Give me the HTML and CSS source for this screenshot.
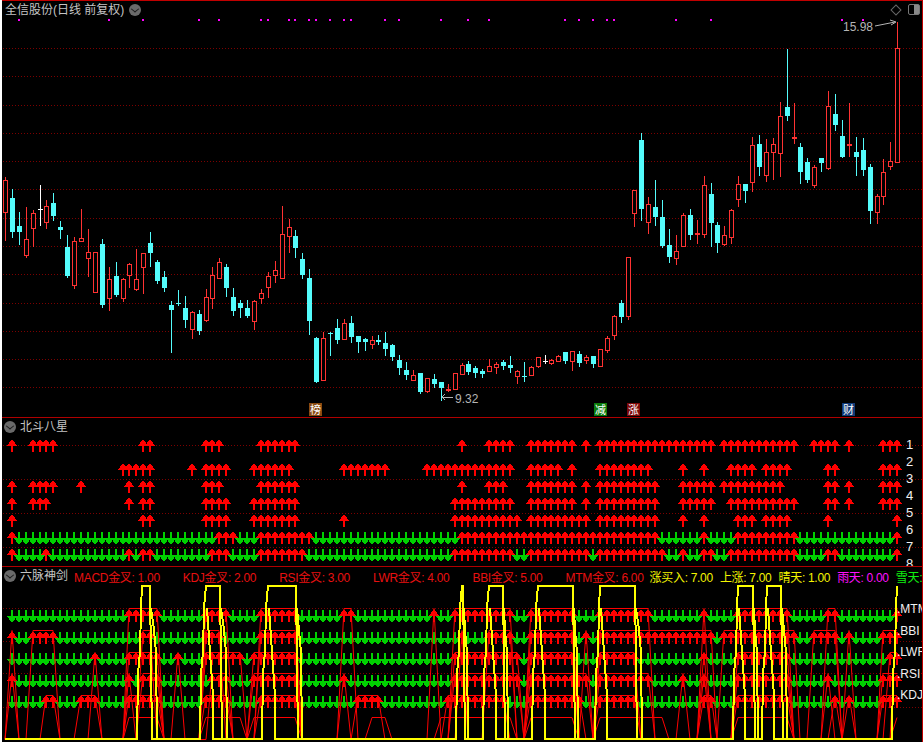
FILE: index.html
```html
<!DOCTYPE html>
<html lang="en">
<head>
    <meta charset="UTF-8">
    <title>全信股份</title>
    <link rel="stylesheet" href="styles.css">
</head>
<body>
    <div class="terminal">
        <section class="pane pane-main">
            <svg class="plot" id="mainPlot" viewBox="2 1 921 416"></svg>
            <header class="pane-head">
                <span class="title">全信股份(日线 前复权)</span>
                <span class="toggle"></span>
            </header>
            <div class="window-tools">
                <span class="tool-diamond"></span>
                <span class="tool-panel"></span>
            </div>
        </section>

        <section class="pane pane-stars">
            <svg class="plot" id="starsPlot" viewBox="2 418 921 148"></svg>
            <header class="pane-head pane-head-sub">
                <span class="toggle"></span>
                <span class="title">北斗八星</span>
            </header>
            <ol class="row-labels">
                <li>1</li><li>2</li><li>3</li><li>4</li><li>5</li><li>6</li><li>7</li><li>8</li>
            </ol>
        </section>

        <section class="pane pane-swords">
            <svg class="plot" id="swordsPlot" viewBox="2 567 921 175"></svg>
            <header class="pane-head pane-head-sub">
                <span class="toggle"></span>
                <span class="title">六脉神剑</span>
                <ul class="legend">
                    <li class="red wide">MACD金叉: 1.00</li>
                    <li class="red wide">KDJ金叉: 2.00</li>
                    <li class="red wide">RSI金叉: 3.00</li>
                    <li class="red wide">LWR金叉: 4.00</li>
                    <li class="red wide">BBI金叉: 5.00</li>
                    <li class="red">MTM金叉: 6.00</li>
                    <li class="yellow">涨买入: 7.00</li>
                    <li class="yellow">上涨: 7.00</li>
                    <li class="yellow">晴天: 1.00</li>
                    <li class="magenta">雨天: 0.00</li>
                    <li class="green">雪天: 0.00</li>
                </ul>
            </header>
            <ul class="signal-labels">
                <li>.MTM</li><li>.BBI</li><li>.LWR</li><li>.RSI</li><li>.KDJ</li>
            </ul>
        </section>
    </div>

    <script src="chart.js"></script>
</body>
</html>
```

FILE: styles.css
```css
* {
    margin: 0;
    padding: 0;
    box-sizing: border-box;
}

body {
    background: #fff;
    overflow: hidden;
}

.terminal {
    width: 921px;
    height: 742px;
    margin-left: 2px;
    background: #000;
    border-top: 1px solid #c00000;
    display: flex;
    flex-direction: column;
    font-family: "Liberation Sans", "Noto Sans CJK SC", sans-serif;
    font-size: 12px;
    color: #c4c4c4;
}

.pane {
    position: relative;
    overflow: hidden;
    border-right: 1px solid #c00000;
}

.pane-main {
    height: 416px;
}

.pane-stars {
    height: 149px;
    border-top: 1px solid #b00000;
}

.pane-swords {
    flex: 1;
    border-top: 1px solid #b00000;
}

.plot {
    position: absolute;
    top: 0;
    left: 0;
    width: 921px;
    height: 100%;
    shape-rendering: crispEdges;
}

.pane-head {
    position: relative;
    display: flex;
    align-items: center;
    gap: 5px;
    height: 18px;
    padding-left: 3px;
    white-space: nowrap;
}

.pane-head-sub {
    padding-left: 2px;
    gap: 4px;
}

.title {
    line-height: 18px;
}

.toggle {
    position: relative;
    flex: none;
    width: 12px;
    height: 12px;
    border-radius: 50%;
    background: #6a6a6a;
}

.toggle::after {
    content: "";
    position: absolute;
    left: 3px;
    top: 2px;
    width: 5px;
    height: 5px;
    border-right: 1px solid #1c1c1c;
    border-bottom: 1px solid #1c1c1c;
    transform: scaleY(0.8) rotate(45deg);
}

.window-tools {
    position: absolute;
    top: 3px;
    right: 2px;
    display: flex;
    align-items: center;
    gap: 8px;
}

.tool-diamond {
    width: 8px;
    height: 8px;
    border: 1px solid #666;
    transform: rotate(45deg);
}

.tool-panel {
    width: 12px;
    height: 11px;
    border: 1px solid #777;
    border-radius: 2px;
    background: linear-gradient(90deg, #000 50%, #888 50%);
}

.legend {
    list-style: none;
    display: flex;
    margin-left: 2px;
    gap: 6px;
    letter-spacing: -0.3px;
}

.legend .wide {
    margin-right: 17px;
}

.legend .yellow,
.legend .magenta {
    margin-right: 1px;
}

.red { color: #e81010; }
.yellow { color: #f4f400; }
.magenta { color: #ff10ff; }
.green { color: #10f010; }

.row-labels,
.signal-labels {
    list-style: none;
    position: absolute;
    color: #f0f0f0;
    white-space: nowrap;
}

.row-labels {
    top: 20px;
    left: 904px;
    display: flex;
    flex-direction: column;
    gap: 3px;
    font-size: 13px;
    line-height: 14px;
}

.signal-labels {
    top: 35px;
    left: 895px;
    display: flex;
    flex-direction: column;
    gap: 7px;
    line-height: 14.6px;
}

.price-tag {
    font-size: 12px;
    fill: #b4b4b4;
    font-family: "Liberation Sans", sans-serif;
}

.badge-text {
    font-size: 11px;
    fill: #fff;
    text-anchor: middle;
    font-family: "Noto Sans CJK SC", sans-serif;
}
```

FILE: chart.js
```js
const RED = '#ff3232';
const CYAN = '#54fcfc';
const WHITE = '#ffffff';
const UP = '#ff0000';
const DOWN = '#00d000';
const LAST = 129;

// candles were measured on a 3x crop: [x, kind, high, bodyTop, bodyBottom, low]
// each block has its own origin so the numbers stay close to the crop
const blocks = [
    { ox: 0, oy: 170, rows: [
        [16,'r',20,30,125,210],[37,'c',57,84,186,200],[58,'c',126,168,186,222],[79,'r',111,208,254,260],
        [100,'r',120,129,173,228],[121,'w',45,118,120,165],[139,'r',90,108,155,174],[160,'c',69,99,138,150],
        [181,'c',153,171,180,204],[202,'c',195,231,318,321],[223,'r',202,213,345,354],[244,'r',117,204,213,213],
        [265,'r',177,246,264,318],[286,'r',246,246,366,366],[307,'c',207,222,405,411],[328,'r',291,327,384,420],
        [349,'c',276,318,375,378],[370,'r',324,327,384,393],[388,'r',279,282,315,351],[409,'r',237,327,357,360],
        [430,'r',249,249,291,369],[451,'c',186,219,249,288],[472,'c',270,276,333,339],[493,'c',303,321,354,363],
        [514,'c',393,405,420,546],[535,'c',360,399,402,405],[556,'c',378,414,450,471],[577,'r',423,426,477,504],
        [598,'c',420,432,483,492],[619,'r',357,381,450,453],[637,'r',291,315,384,414],[658,'r',264,276,324,324],
        [679,'c',282,291,354,378],[700,'c',354,381,423,435],[721,'c',390,399,414,441],[742,'c',390,414,438,441],
        [763,'r',390,393,453,477],[784,'r',357,369,384,399],[805,'r',306,318,351,381],[826,'r',273,300,315,336],
        [847,'r',108,192,324,324],[868,'r',147,171,198,246],[886,'c',180,198,234,261],[907,'c',249,267,315,324],
        [928,'c',297,324,453,492]
    ]},
    { ox: 300, oy: 300, rows: [
        [49,'c',111,114,246,246],[70,'r',96,114,240,240],[91,'c',96,99,102,165],[112,'c',57,84,120,129],
        [133,'r',57,69,117,117],[154,'c',48,69,111,126],[175,'c',108,108,126,156],[196,'c',114,117,126,150],
        [217,'r',108,120,132,144],[235,'c',105,120,126,132],[256,'c',96,129,147,165],[277,'c',132,135,171,180],
        [298,'c',165,180,204,222],[319,'c',186,210,225,237],[340,'r',210,225,240,240],[361,'c',219,219,276,279],
        [382,'r',234,234,273,276],[403,'c',222,237,252,261],[424,'c',246,246,264,300],[445,'r',252,267,273,273],
        [466,'r',219,219,267,267],[487,'r',189,195,222,222],[505,'c',183,192,216,222],[526,'c',198,204,219,231],
        [547,'c',207,213,222,231],[568,'r',177,198,213,213],[589,'r',186,192,201,219],[610,'c',180,186,198,207],
        [631,'c',168,195,204,216],[652,'r',210,213,228,249],[673,'c',186,228,231,243],[694,'r',198,201,225,225],
        [715,'r',171,171,198,201],[736,'w',165,183,186,189],[754,'r',177,181,189,192],[775,'r',165,168,183,183],
        [796,'c',156,156,183,189],[817,'r',153,153,183,210],[838,'c',153,162,189,198],[859,'r',165,171,180,189],
        [880,'c',168,168,192,201],[901,'r',147,147,198,198],[922,'r',108,114,150,156],[943,'r',45,48,105,117],
        [964,'c',0,9,51,66],[985,'r',-129,-129,48,57]
    ]},
    { ox: 620, oy: 0, rows: [
        [43,'r',570,570,638,678],[64,'c',400,420,627,660],[85,'r',591,612,666,699],[106,'c',540,621,651,675],
        [127,'c',600,651,738,741],[148,'c',687,735,771,786],[169,'r',705,753,774,792],[190,'r',639,645,738,738],
        [211,'c',627,645,705,717],[232,'r',660,699,705,729],[253,'r',528,555,702,711],[274,'c',549,582,669,738],
        [292,'c',666,675,729,756],[313,'r',678,705,732,735],[334,'r',627,630,711,729],[355,'r',528,552,597,618],
        [376,'c',552,552,573,606],[397,'r',411,435,546,573],[418,'c',405,432,501,525],[439,'r',417,456,525,543],
        [460,'r',414,432,456,537],[481,'r',306,348,459,528],[502,'c',147,321,348,360],[523,'r',309,411,417,429],
        [541,'c',429,441,516,549],[562,'c',474,486,540,546],[583,'r',495,501,555,561],[604,'c',474,474,489,513],
        [625,'r',273,318,504,507],[646,'c',282,342,375,390],[667,'c',360,408,471,471],[688,'r',309,432,438,468],
        [709,'c',411,456,471,525],[730,'c',414,450,510,525],[751,'c',492,501,633,669],[772,'r',582,588,636,669],
        [790,'r',477,516,588,612],[811,'r',426,483,498,507],[832,'r',66,144,486,486]
    ]}
];

const candles = [];
blocks.forEach(function(block) {
    block.rows.forEach(function(r) {
        candles.push({
            x: block.ox + Math.floor(r[0] / 3),
            kind: r[1],
            high: block.oy + Math.round(r[2] / 3),
            top: block.oy + Math.round(r[3] / 3),
            bottom: block.oy + Math.round(r[4] / 3),
            low: block.oy + Math.round(r[5] / 3)
        });
    });
});

const kindColor = { r: RED, c: CYAN, w: WHITE };

// "1,4-7,20" -> {1,4,5,6,7,20}
function parseSet(text) {
    const set = new Set();
    text.split(',').forEach(function(part) {
        const ends = part.split('-').map(Number);
        const to = ends.length > 1 ? ends[1] : ends[0];
        for (let i = ends[0]; i <= to; i++) set.add(i);
    });
    return set;
}

function line(x1, y1, x2, y2, color) {
    return `<line x1="${x1}" y1="${y1}" x2="${x2}" y2="${y2}" stroke="${color}"/>`;
}

function dottedLine(y) {
    return `<line x1="3" y1="${y + 0.5}" x2="922" y2="${y + 0.5}" stroke="#7c0000" stroke-dasharray="1 2"/>`;
}

function drawCandle(c) {
    const color = kindColor[c.kind];
    const wx = c.x + 0.5;
    let out = line(wx, c.high, wx, c.low + 1, color);
    const h = c.bottom - c.top;
    if (c.kind === 'r' && h > 2) {
        out += `<rect x="${c.x - 1.5}" y="${c.top + 0.5}" width="4" height="${h}" fill="#000" stroke="${color}"/>`;
    } else {
        out += `<rect x="${c.x - 2}" y="${c.top}" width="5" height="${Math.max(h, 1)}" fill="${color}"/>`;
    }
    return out;
}

function upArrow(x, y) {
    return `<path d="M${x - 1} ${y}H${x + 1}L${x + 5} ${y + 6}H${x + 1}V${y + 12}H${x - 1}V${y + 6}H${x - 5}Z" fill="${UP}"/>`;
}

function downArrow(x, y) {
    return `<path d="M${x - 1} ${y}H${x + 1}V${y + 6}H${x + 5}L${x + 1} ${y + 12}H${x - 1}L${x - 5} ${y + 6}H${x - 1}Z" fill="${DOWN}"/>`;
}

// red only, or red with green filling the other slots
function arrowRow(y, reds, withDown) {
    const on = parseSet(reds);
    let out = '';
    for (let i = 1; i < LAST; i++) {
        if (withDown && !on.has(i)) out += downArrow(candles[i].x, y);
    }
    on.forEach(function(i) {
        out += upArrow(candles[i].x, y);
    });
    return out;
}

function signalLine(reds, level) {
    const on = parseSet(reds);
    const pts = candles.map(function(c, i) {
        return c.x + ',' + (on.has(i) ? level : 739.5);
    });
    return `<polyline points="${pts.join(' ')}" fill="none" stroke="#ff0000" shape-rendering="auto"/>`;
}

// main pane
const gridMain = [48, 76, 105, 133, 161, 189, 218, 246, 274, 303, 331, 359, 387];
const buyDots = [19, 109, 143, 199, 219, 261, 268, 289, 295, 309, 316, 330, 344, 351, 385, 399, 441, 468, 489, 565, 579, 593, 607, 614, 676, 711, 842, 863];
const badges = [
    { x: 309, text: '榜', bg: '#8a4a10' },
    { x: 594, text: '减', bg: '#0a7a0a' },
    { x: 627, text: '涨', bg: '#7c0808' },
    { x: 842, text: '财', bg: '#123a78' }
];

let mainSvg = gridMain.map(dottedLine).join('');
mainSvg += buyDots.map(function(x) {
    return `<rect x="${x - 1}" y="19" width="2" height="2" fill="#ff00ff"/>`;
}).join('');
mainSvg += candles.map(drawCandle).join('');
mainSvg += `<text class="price-tag" x="843" y="31">15.98</text>`;
mainSvg += `<path d="M875 26L895 22M890 20L896 22L891 25" fill="none" stroke="#b4b4b4" shape-rendering="auto"/>`;
mainSvg += `<text class="price-tag" x="455" y="403">9.32</text>`;
mainSvg += `<path d="M453 397H442M445 394L442 397L445 400" fill="none" stroke="#b4b4b4"/>`;
mainSvg += badges.map(function(b) {
    return `<rect x="${b.x}" y="403" width="13" height="13" fill="${b.bg}"/>` +
        `<text class="badge-text" x="${b.x + 6.5}" y="414">${b.text}</text>`;
}).join('');
document.getElementById('mainPlot').innerHTML = mainSvg;

// 北斗八星
const starRows = [
    { y: 440, reds: '1,4-7,20,21,29-31,37-42,66,70-73,76-82,84,86-102,104-114,117-120,122,127-129' },
    { y: 464, reds: '17-21,27,29-32,36-41,49-55,61-73,76-80,82,86-93,98,101,105-108,110-113,119,120,127-129' },
    { y: 481, reds: '1,4-7,11,18,20,21,29-31,37-42,66,70-72,76-82,84,86-94,98-102,104-112,119,120,122,127-129' },
    { y: 498, reds: '1,4-6,18,20,21,29-32,36-42,65-73,76-82,84,86-94,98-102,105-114,119,120,122,127-129' },
    { y: 515, reds: '1,20,21,29-32,36-42,49,65-74,76-84,86-94,98,101,106-108,110-113,119,129' },
    { y: 532, reds: '1,31-33,37-44,66-94,101,106-114,129', down: true },
    { y: 549, reds: '1,6,18,20,21,30-32,37-43,65-73,76-84,86-95,98,101,102,105-114,119,120,129', down: true }
];

let starsSvg = [445, 479, 513, 547].map(dottedLine).join('');
starRows.forEach(function(row) {
    starsSvg += arrowRow(row.y, row.reds, row.down);
});
document.getElementById('starsPlot').innerHTML = starsSvg;

// 六脉神剑
const swordRows = [
    { y: 610, level: 608.5, reds: '18-22,29-32,37-42,49,50,62,65-73,76-82,86-93,101,106-113,119,120,129' },
    { y: 632, level: 630.5, reds: '1,4-7,20,21,29-31,37-42,66,70-73,76-82,84,86-102,104-114,117-120,122,127-129' },
    { y: 653, level: 652.5, reds: '13,18-22,25,29-34,36-42,65-74,76-82,86-91,101,106-113,128,129' },
    { y: 675, level: 673.5, reds: '1,18,20-22,30-32,36-42,49,65-74,76-84,86-93,98,101,106-113,119,127-129' },
    { y: 696, level: 695.5, reds: '6,7,11-13,18-22,29-32,37-42,51-54,64-72,76-83,86-91,101,102,106-113,120,122,127-129' }
];
const macdOn = '18-22,29-34,36-42,53-55,63-73,76-82,86-95,106-113,129';

// left foot, top start, top end, right foot of each yellow block
const yellowBlocks = [
    [137, 142, 150, 157], [200, 206, 220, 227], [262, 268, 296, 302],
    [456, 462, 463, 468], [483, 489, 503, 508], [532, 538, 573, 578],
    [595, 600, 635, 642], [733, 738, 753, 758], [762, 767, 781, 787]
];
const BASE = 739;
const TOP = 586;

// outer shape: base, stepped rise to the top, straight drop, along the base again
function yellowPath() {
    let d = `M5 ${BASE}`;
    yellowBlocks.forEach(function(b) {
        const mid = Math.round((b[0] + b[1]) / 2);
        d += `L${b[0]} ${BASE}L${b[0] + 1} 673L${mid} 652L${mid + 1} 608L${b[1]} ${TOP}L${b[2]} ${TOP}`;
        d += `L${b[2] + 2} ${BASE}L${b[3]} ${BASE}`;
    });
    d += `L892 ${BASE}L893 673L895 652L896 608L897 ${TOP}`;
    return d;
}

// lagging strands beside each block
function yellowInner() {
    return yellowBlocks.map(function(b) {
        const right = `M${b[3]} ${BASE}L${b[3] - 1} 652L${b[3] - 3} 630L${b[2] + 1} 608`;
        const from = b[1] + 7;
        if (b[2] - from < 6) return right;
        return right + `M${b[1] + 1} 608L${from - 3} 652L${from} 696L${from} ${BASE}L${b[2] + 2} ${BASE}`;
    }).join('');
}

let swordsSvg = [608, 641, 673, 707].map(dottedLine).join('');
swordRows.forEach(function(row) {
    swordsSvg += arrowRow(row.y, row.reds, true);
});
swordRows.forEach(function(row) {
    swordsSvg += signalLine(row.reds, row.level);
});
swordsSvg += signalLine(macdOn, 717.5);
swordsSvg += `<path d="${yellowPath()}${yellowInner()}" fill="none" stroke="#ffff00" stroke-width="2"/>`;
document.getElementById('swordsPlot').innerHTML = swordsSvg;
```
